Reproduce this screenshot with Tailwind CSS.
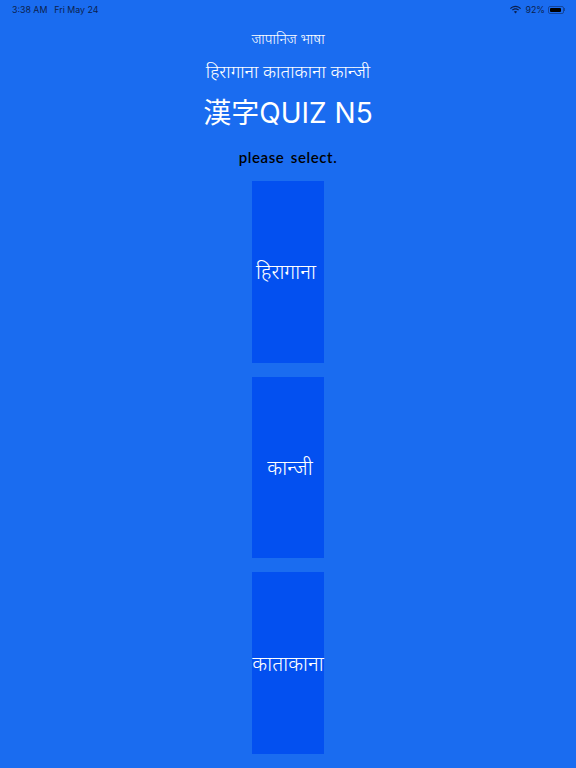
<!DOCTYPE html>
<html lang="hi">
<head>
    <meta charset="UTF-8">
    <meta name="viewport" content="width=device-width, initial-scale=1.0">
    <title>Kanji Quiz N5</title>
    <script src="https://cdn.jsdelivr.net/npm/@tailwindcss/browser@4"></script>
</head>
<body class="bg-[#1a6cf0] h-screen w-full overflow-hidden text-white font-['Noto_Sans','Noto_Sans_CJK_JP',sans-serif]">
    <!-- Status bar -->
    <div class="h-[17px] pt-[2px] pl-3 pr-[11px] flex items-center justify-between text-[8.8px] text-[#0b1f4d] font-['Inter',sans-serif]">
        <div class="flex gap-[7px]">
            <span>3:38 AM</span>
            <span>Fri May 24</span>
        </div>
        <div class="flex items-center gap-[3px]">
            <svg class="w-[11px] h-[9px] mr-[2px]" viewBox="0 0 22 16" fill="#0b1f4d"><path d="M11 3C7 3 4 4.600 1.500 7L0 5.300C3 2.300 6.800.5 11 .5s8 1.800 11 4.800L20.500 7C18 4.600 15 3 11 3zM11 8c-2 0-3.800.8-5.300 2.100L4 8.400C5.900 6.600 8.300 5.500 11 5.500s5.100 1.100 7 2.900l-1.700 1.700C14.800 8.800 13 8 11 8zM11 11c1.300 0 2.400.5 3.200 1.300L11 15.800l-3.200-3.500C8.600 11.500 9.700 11 11 11z"/></svg>
            <span>92%</span>
            <div class="flex items-center">
                <div class="w-[16px] h-[8px] rounded-[2px] border border-[#0b1f4d]/50 p-px"><div class="h-full w-[90%] bg-black rounded-[1px]"></div></div>
                <div class="w-px h-[3px] bg-[#0b1f4d]/50"></div>
            </div>
        </div>
    </div>

    <div class="flex flex-col items-center">
        <div class="mt-[11px] text-[14.2px] leading-[22px] font-light">जापानिज भाषा</div>
        <div class="mt-[8px] text-[18px] leading-[26px] font-light">हिरागाना काताकाना कान्जी</div>
        <div class="mt-[7px] text-[28px] leading-[44px] font-['Inter','Noto_Sans_CJK_JP',sans-serif]">漢字QUIZ N5</div>
        <div class="mt-[11px] text-[15px] leading-[22px] font-semibold tracking-[0.6px] [word-spacing:2px] text-black font-['Lato',sans-serif]">please select.</div>

        <div class="mt-[13px] flex flex-col gap-[14px]">
            <button class="w-[72px] h-[181.67px] bg-[#0350f0] text-[20.5px] font-light flex items-center justify-center whitespace-nowrap pr-[4px]">हिरागाना</button>
            <button class="w-[72px] h-[181.67px] bg-[#0350f0] text-[20.5px] font-light flex items-center justify-center whitespace-nowrap pl-[4px]">कान्जी</button>
            <button class="w-[72px] h-[181.67px] bg-[#0350f0] text-[20.5px] font-light flex items-center justify-center whitespace-nowrap">काताकाना</button>
        </div>
    </div>
</body>
</html>
